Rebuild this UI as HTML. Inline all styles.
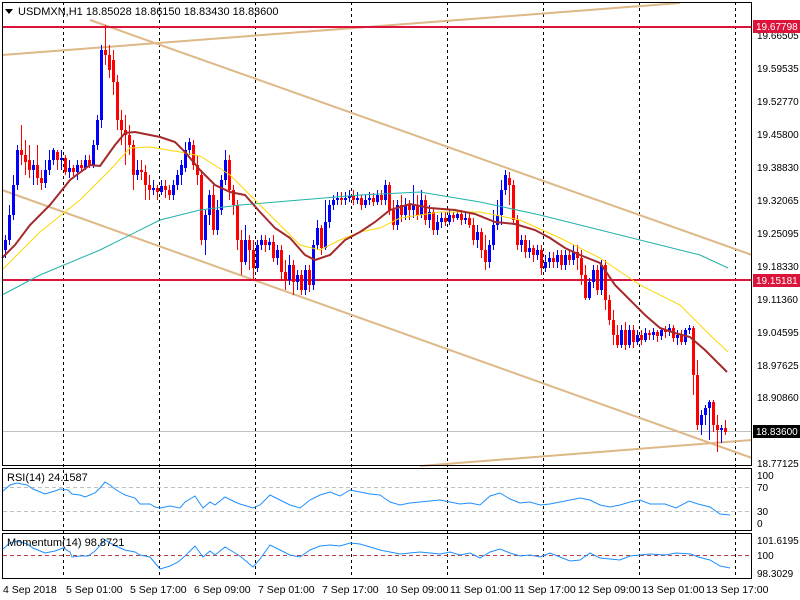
<!DOCTYPE html>
<html><head><meta charset="utf-8"><style>
html,body{margin:0;padding:0;background:#fff;width:800px;height:600px;overflow:hidden}
svg{display:block;font-family:"Liberation Sans",sans-serif}
</style></head><body>
<svg width="800" height="600" xmlns="http://www.w3.org/2000/svg">
<rect width="800" height="600" fill="#fff"/>
<g stroke="#000" stroke-dasharray="3,3" stroke-width="1">
<line x1="63.5" y1="2" x2="63.5" y2="578"/><line x1="159.5" y1="2" x2="159.5" y2="578"/>
<line x1="255.5" y1="2" x2="255.5" y2="578"/><line x1="351.5" y1="2" x2="351.5" y2="578"/>
<line x1="447.5" y1="2" x2="447.5" y2="578"/><line x1="543.5" y1="2" x2="543.5" y2="578"/>
<line x1="639.5" y1="2" x2="639.5" y2="578"/><line x1="735.5" y1="2" x2="735.5" y2="578"/>
</g>
<line x1="2" y1="431.5" x2="752" y2="431.5" stroke="#c0c0c0"/>
<g stroke="#deb887" stroke-width="2" fill="none">
<line x1="90" y1="20" x2="752" y2="255"/>
<line x1="2" y1="190" x2="752" y2="458"/>
<line x1="2" y1="55" x2="680" y2="3"/>
<line x1="420" y1="466" x2="752" y2="440"/>
</g>
<g stroke="#dc143c" stroke-width="2"><line x1="2" y1="27" x2="752" y2="27"/><line x1="2" y1="280" x2="752" y2="280"/></g>
<g fill="none" stroke="#0000ff">
<path stroke-width="1" d="M5.5 235V258M9.5 205V245M13.5 175V220M17.5 145V190M33.5 160V185M45.5 160V188M49.5 150V175M53.5 148V165M61.5 150V170M69.5 160V178M77.5 160V180M85.5 155V170M93.5 140V168M97.5 115V150M101.5 45V128M137.5 160V180M153.5 180V195M161.5 180V195M173.5 180V200M177.5 170V190M181.5 160V185M185.5 142V172M189.5 138V155M205.5 210V255M209.5 190V225M217.5 200V235M221.5 175V215M225.5 150V185M245.5 225V265M257.5 240V272M261.5 235V250M269.5 238V250M277.5 245V265M289.5 255V285M297.5 270V290M305.5 265V295M313.5 240V290M317.5 220V250M325.5 200V250M329.5 200V228M333.5 195V210M337.5 192V205M345.5 192V205M349.5 190V202M357.5 192V204M365.5 195V208M369.5 192V205M377.5 190V205M385.5 180V205M397.5 200V230M405.5 198V220M413.5 185V218M421.5 190V218M429.5 205V228M437.5 215V235M441.5 212V228M449.5 210V225M457.5 210V220M465.5 212V224M477.5 225V248M489.5 240V268M493.5 210V250M497.5 200V230M501.5 180V225M505.5 170V195M521.5 235V252M529.5 240V258M537.5 245V260M545.5 255V272M549.5 252V268M557.5 250V268M565.5 250V270M573.5 245V265M589.5 278V300M593.5 265V288M601.5 260V295M621.5 325V348M629.5 325V348M637.5 330V345M645.5 328V342M653.5 328V340M661.5 328V340M669.5 324V336M677.5 330V345M685.5 328V345M689.5 325V334M701.5 410V435M705.5 405V425M709.5 400V440M721.5 425V443"/>
<path stroke-width="3" d="M5.5 250V240M9.5 240V215M13.5 215V185M17.5 185V150M33.5 170V165M45.5 183V170M49.5 170V160M53.5 160V150M61.5 160V158M69.5 172V168M77.5 172V165M85.5 168V160M93.5 165V145M97.5 145V120M101.5 120V50M137.5 175V170M153.5 190V188M161.5 192V186M173.5 195V185M177.5 185V175M181.5 175V165M185.5 168V150M189.5 150V142M205.5 240V215M209.5 215V195M217.5 230V210M221.5 210V180M225.5 180V160M245.5 262V240M257.5 268V245M261.5 245V240M269.5 245V242M277.5 258V250M289.5 280V265M297.5 282V275M305.5 290V270M313.5 285V245M317.5 245V228M325.5 248V222M329.5 222V205M333.5 205V200M337.5 200V198M345.5 200V198M349.5 198V196M357.5 200V198M365.5 205V200M369.5 200V198M377.5 202V195M385.5 200V185M397.5 225V205M405.5 215V205M413.5 210V205M421.5 215V200M429.5 220V212M437.5 230V222M441.5 222V218M449.5 222V215M457.5 218V214M465.5 220V218M477.5 240V232M489.5 262V245M493.5 245V225M497.5 225V215M501.5 215V190M505.5 190V175M521.5 245V240M529.5 252V248M537.5 255V250M545.5 268V262M549.5 262V258M557.5 262V255M565.5 265V255M573.5 260V252M589.5 298V282M593.5 282V270M601.5 290V265M621.5 345V330M629.5 345V330M637.5 342V335M645.5 340V333M653.5 335V332M661.5 336V330M669.5 332V328M677.5 338V335M685.5 342V330M689.5 330V328M701.5 425V415M705.5 415V408M709.5 408V402M721.5 430V428"/>
</g>
<g fill="none" stroke="#ff0000">
<path stroke-width="1" d="M21.5 125V165M25.5 140V175M29.5 145V178M37.5 145V185M41.5 170V190M57.5 150V170M65.5 155V175M73.5 165V176M81.5 160V172M89.5 155V168M105.5 25V65M109.5 45V78M113.5 50V95M117.5 75V130M121.5 110V145M125.5 115V165M129.5 125V155M133.5 140V190M141.5 160V180M145.5 165V200M149.5 175V200M157.5 185V200M165.5 180V198M169.5 185V200M193.5 140V170M197.5 155V185M201.5 170V245M213.5 185V235M229.5 155V200M233.5 185V215M237.5 200V250M241.5 230V275M249.5 235V270M253.5 240V280M265.5 235V252M273.5 235V262M281.5 245V280M285.5 260V290M293.5 260V295M301.5 270V295M309.5 265V292M321.5 225V255M341.5 192V205M353.5 190V205M361.5 195V210M373.5 193V206M381.5 190V205M389.5 182V215M393.5 200V230M401.5 195V222M409.5 200V220M417.5 195V220M425.5 195V225M433.5 208V235M445.5 212V226M453.5 212V222M461.5 210V225M469.5 214V228M473.5 218V245M481.5 228V258M485.5 235V270M509.5 172V205M513.5 180V225M517.5 215V250M525.5 235V258M533.5 245V262M541.5 245V275M553.5 252V268M561.5 250V270M569.5 250V265M577.5 245V270M581.5 250V285M585.5 265V300M597.5 265V295M605.5 260V310M609.5 295V325M613.5 310V345M617.5 325V348M625.5 322V350M633.5 325V348M641.5 330V345M649.5 330V340M657.5 330V342M665.5 326V338M673.5 325V342M681.5 330V345M693.5 326V395M697.5 360V430M713.5 400V432M717.5 415V452M725.5 420V435"/>
<path stroke-width="3" d="M21.5 150V155M25.5 155V162M29.5 160V170M37.5 165V178M41.5 178V183M57.5 152V160M65.5 158V172M73.5 168V172M81.5 165V168M89.5 160V165M105.5 50V55M109.5 55V70M113.5 60V82M117.5 82V120M121.5 120V130M125.5 130V135M129.5 135V145M133.5 145V175M141.5 170V172M145.5 172V185M149.5 185V190M157.5 188V192M165.5 186V190M169.5 190V195M193.5 145V165M197.5 165V175M201.5 175V240M213.5 195V230M229.5 160V190M233.5 190V205M237.5 205V240M241.5 240V262M249.5 240V250M253.5 250V268M265.5 240V245M273.5 242V258M281.5 250V272M285.5 272V280M293.5 265V282M301.5 275V290M309.5 270V285M321.5 228V248M341.5 198V200M353.5 196V200M361.5 198V205M373.5 198V202M381.5 195V200M389.5 185V210M393.5 210V225M401.5 205V215M409.5 205V210M417.5 205V215M425.5 200V220M433.5 212V230M445.5 218V222M453.5 215V218M461.5 214V220M469.5 218V225M473.5 225V240M481.5 232V250M485.5 250V262M509.5 178V185M513.5 185V220M517.5 220V245M525.5 240V252M533.5 248V255M541.5 250V268M553.5 258V262M561.5 255V265M569.5 255V260M577.5 252V258M581.5 258V275M585.5 275V298M597.5 270V290M605.5 265V300M609.5 300V320M613.5 320V335M617.5 335V345M625.5 330V345M633.5 330V342M641.5 335V340M649.5 333V335M657.5 332V336M665.5 330V332M673.5 328V338M681.5 335V342M693.5 328V375M697.5 375V425M713.5 402V425M717.5 425V430M725.5 428V432"/>
</g>
<polyline fill="none" stroke="#20b2aa" stroke-width="1" points="2,295 40,275 100,250 160,220 200,210 240,205 300,200 360,195 420,192 480,202 540,215 600,230 660,245 700,255 728,268"/>
<polyline fill="none" stroke="#ffd700" stroke-width="1" points="2,270 40,232 80,200 110,170 130,148 150,147 180,152 200,156 230,175 255,200 280,225 300,245 320,250 340,240 360,232 380,228 400,218 440,212 480,212 520,220 560,238 600,258 640,285 680,305 710,335 728,352"/>
<polyline fill="none" stroke="#a52a2a" stroke-width="2" points="2,258 15,245 30,225 50,205 70,180 90,165 100,166 115,145 125,133 135,132 160,137 175,142 185,152 200,170 215,185 230,192 245,195 260,212 275,228 290,238 305,255 315,260 330,255 345,240 360,232 375,222 390,210 410,204 430,208 455,210 475,214 495,222 515,224 535,230 550,238 565,248 580,255 600,263 615,285 630,300 645,315 660,328 675,333 690,337 705,350 720,365 727,372"/>
<g fill="none" stroke="#000" stroke-width="1">
<rect x="2.5" y="2.5" width="749" height="463"/>
<rect x="2.5" y="468.5" width="749" height="62"/>
<rect x="2.5" y="533.5" width="749" height="45"/>
</g>
<g stroke="#c0c0c0" stroke-dasharray="4,3"><line x1="3" y1="487.5" x2="751" y2="487.5"/><line x1="3" y1="511.5" x2="751" y2="511.5"/></g>
<line x1="3" y1="555.5" x2="751" y2="555.5" stroke="#c04040" stroke-dasharray="4,3"/>
<polyline fill="none" stroke="#1e90ff" points="3,491 10,485 17,483 27,485 33,489 45,494 55,491 60,489 68,490 72,494 80,495 85,497 95,493 100,488 105,482 110,485 115,489 118,491 125,495 135,498 140,504 150,504 155,507 160,508 170,506 180,508 185,502 195,496 203,508 210,502 215,505 225,497 235,502 240,504 253,508 260,505 270,495 280,500 290,505 300,508 310,500 320,495 330,492 340,496 350,490 360,492 370,494 380,495 390,502 400,505 410,503 420,502 430,501 440,500 450,502 460,504 470,503 480,505 490,496 500,493 510,499 520,503 530,502 540,505 550,504 560,502 570,500 580,498 590,500 600,505 610,507 620,505 630,502 640,500 650,504 665,504 676,508 689,501 698,504 710,507 720,514 730,515"/>
<polyline fill="none" stroke="#1e90ff" points="3,549 10,543 17,541 27,544 33,548 45,553 55,551 63,548 70,552 72,557 80,556 88,556 95,551 105,540 110,543 118,547 125,550 135,552 140,555 150,557 155,563 160,569 170,566 178,562 185,556 195,546 203,557 210,551 215,555 225,547 235,553 240,556 253,567 260,559 270,545 280,550 290,555 300,557 310,550 320,546 330,545 340,546 350,543 360,544 370,547 380,550 390,552 400,554 410,553 420,552 430,553 440,554 450,552 460,555 470,553 480,558 490,552 500,549 510,553 520,556 530,555 540,557 550,553 560,557 570,561 580,560 590,553 600,558 610,559 620,560 630,556 640,555 650,554 665,555 676,553 691,554 698,557 710,560 720,566 730,568"/>
<polygon points="5,9 13,9 9,14" fill="#000"/>
<text x="18" y="15" font-size="11" fill="#000">USDMXN,H1  18.85028 18.86150 18.83430 18.83600</text>
<text x="7" y="481" font-size="11">RSI(14) 24.1587</text>
<text x="7" y="546" font-size="11">Momentum(14) 98.8721</text>
<g font-size="10" fill="#000">
<text x="757" y="39">19.66505</text><text x="757" y="72">19.59535</text><text x="757" y="105">19.52770</text>
<text x="757" y="138">19.45800</text><text x="757" y="171">19.38830</text><text x="757" y="204">19.32065</text>
<text x="757" y="237">19.25095</text><text x="757" y="270">19.18330</text><text x="757" y="303">19.11360</text>
<text x="757" y="336">19.04595</text><text x="757" y="369">18.97625</text><text x="757" y="401">18.90860</text>
<text x="757" y="467">18.77125</text>
<text x="757" y="479">100</text><text x="757" y="491">70</text><text x="757" y="515">30</text><text x="757" y="527">0</text>
<text x="757" y="544">101.6195</text><text x="757" y="559">100</text><text x="757" y="577">98.3029</text>
</g>
<rect x="753" y="20" width="47" height="13" fill="#dc143c"/><text x="756" y="30" font-size="10" fill="#fff">19.67798</text>
<rect x="753" y="274" width="47" height="13" fill="#dc143c"/><text x="756" y="284" font-size="10" fill="#fff">19.15181</text>
<rect x="753" y="425" width="47" height="13" fill="#000"/><text x="756" y="435" font-size="10" fill="#fff">18.83600</text>
<g font-size="10.5">
<text x="3" y="593">4 Sep 2018</text><text x="66" y="593">5 Sep 01:00</text><text x="130" y="593">5 Sep 17:00</text>
<text x="194" y="593">6 Sep 09:00</text><text x="258" y="593">7 Sep 01:00</text><text x="322" y="593">7 Sep 17:00</text>
<text x="386" y="593">10 Sep 09:00</text><text x="450" y="593">11 Sep 01:00</text><text x="514" y="593">11 Sep 17:00</text>
<text x="578" y="593">12 Sep 09:00</text><text x="642" y="593">13 Sep 01:00</text><text x="706" y="593">13 Sep 17:00</text>
</g>
</svg>
</body></html>
